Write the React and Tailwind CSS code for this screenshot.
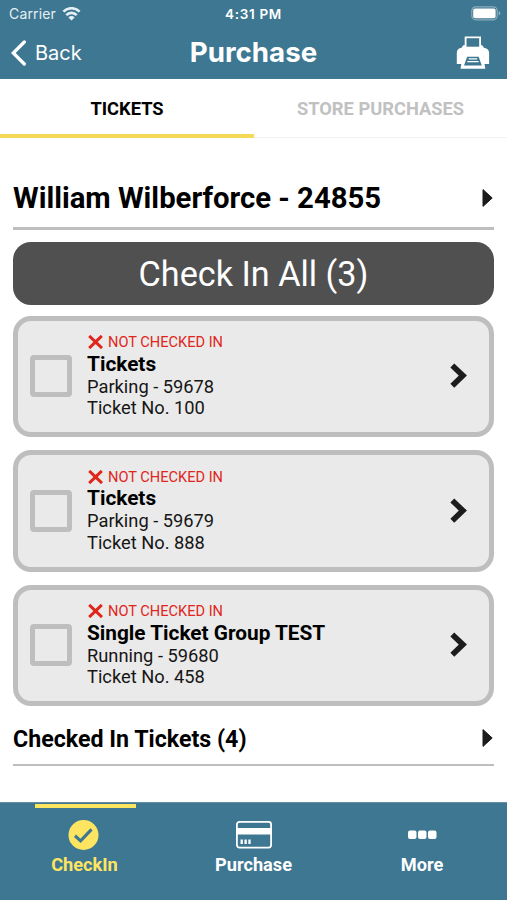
const TICKETS = [
  { id: 59678, title: 'Tickets', type: 'Parking', number: 100 },
  { id: 59679, title: 'Tickets', type: 'Parking', number: 888 },
  { id: 59680, title: 'Single Ticket Group TEST', type: 'Running', number: 458 },
]

function WifiIcon() {
  return (
    <svg width="19" height="14" viewBox="0 0 18 14" fill="none" stroke="currentColor" strokeWidth="2.7">
      <path d="M0.9 4.600a11.5 11.5 0 0 1 16.2 0" />
      <path d="M3.8 8.100a7.4 7.4 0 0 1 10.4 0" />
      <path d="M9 13.500 5.900 10.400a4.3 4.3 0 0 1 6.200 0z" fill="currentColor" stroke="none" />
    </svg>
  )
}

function BatteryIcon() {
  return (
    <svg width="30" height="15" viewBox="0 0 30 15" fill="none">
      <rect x="0.8" y="0.8" width="25.4" height="13" rx="4" stroke="#fff" strokeOpacity="0.4" strokeWidth="1.2" />
      <rect x="2.2" y="2.4" width="22.4" height="9.8" rx="2" fill="#fff" />
      <path d="M27.6 5c1.3.5 1.8 1.3 1.8 2.2s-.5 1.7-1.8 2.2z" fill="#fff" fillOpacity="0.4" />
    </svg>
  )
}

function PrinterIcon() {
  return (
    <svg width="34" height="34" viewBox="0 0 34 34">
      <path d="M8.700.6h16.300v8.700h1.300l1.600 2.400c2.800.3 5.200 2.200 5.200 5V28h-4.600l.8 4.700H4.500L5.300 28H.8V16.700c0-2.800 2-4.700 4.800-5l1.600-2.400h1.500z" fill="#fff" />
      <path d="M10.500 2.200h12.700v8.500H10.500z" fill="#3e7791" />
      <path d="M11.200 20.800h11.400l3.200 8.600H8z" fill="#3e7791" />
      <path d="M12.700 22.900h8.500M11.300 25.600h11.300" stroke="#fff" strokeWidth="1.400" />
    </svg>
  )
}

function CardIcon() {
  return (
    <svg width="36" height="28" viewBox="0 0 36 28" fill="none">
      <rect x="0.900" y="0.900" width="34.200" height="25.800" rx="2.600" stroke="#fff" strokeWidth="1.800" />
      <path d="M1 10.200h34" stroke="#fff" strokeWidth="6.600" />
      <path d="M5.700 18.500v4.500M9.600 18.500v4.500M13.500 18.500v4.500" stroke="#fff" strokeWidth="2.300" />
    </svg>
  )
}

function Arrow() {
  return (
    <svg width="12" height="20" viewBox="0 0 12 20">
      <path d="M1 1.600v16.800L10.200 10z" fill="#1c1c1c" stroke="#1c1c1c" strokeLinejoin="round" />
    </svg>
  )
}

function TicketCard({ ticket }) {
  return (
    <div className="flex h-[121.500px] items-center rounded-[18px] border-[5px] border-[#bebebe] bg-[#eaeaea] pl-3 pr-[21px]">
      <div className="size-[42px] shrink-0 rounded-[4px] border-[5px] border-[#bebebe]" />
      <div className="ml-[15px] flex-1">
        <div className="flex h-4 items-center gap-[5px] pl-px pt-px text-[14.600px] text-[#e0261b]">
          <svg width="15" height="14" viewBox="0 0 15 14" fill="none" stroke="currentColor" strokeWidth="3">
            <path d="M1.200.9 14 13.100M13.800.9 1.200 13.100" />
          </svg>
          <p className="whitespace-nowrap pt-0.5">NOT CHECKED IN</p>
        </div>
        <p className="mt-0.5 text-[20.800px] font-bold leading-[25px] text-black">{ticket.title}</p>
        <p className="-mt-px text-[18.300px] leading-[21.500px]">{`${ticket.type} - ${ticket.id}`}</p>
        <p className="text-[18.300px] leading-[21.500px]">{`Ticket No. ${ticket.number}`}</p>
      </div>
      <svg width="18" height="28" viewBox="0 0 18 28" fill="none" stroke="#1c1c1c" strokeWidth="5.600">
        <path d="M2.300 3.500 12.900 13.600 2.300 23.700" strokeLinejoin="miter" />
      </svg>
    </div>
  )
}

export default function App() {
  return (
    <div className="flex h-[900px] w-[507px] flex-col overflow-hidden bg-white font-['Roboto',sans-serif] text-[#161616]">
      <header className="h-[79px] shrink-0 bg-[#3e7791] font-['Inter',sans-serif] text-white">
        <div className="grid h-[27px] grid-cols-3 items-center px-[9px] text-[13.500px]">
          <div className="flex items-center gap-1.5 text-[#e6f0f4]">
            <span className="text-[14px] tracking-[0.15px]">Carrier</span>
            <WifiIcon />
          </div>
          <span className="pt-px text-center font-semibold tracking-[0.700px]">4:31 PM</span>
          <div className="-mr-[3px] flex justify-end">
            <BatteryIcon />
          </div>
        </div>
        <div className="grid h-[52px] grid-cols-3 items-center pl-[11px] pr-[17px]">
          <div className="flex items-center gap-2">
            <svg width="16" height="26" viewBox="0 0 16 26" fill="none" stroke="#fff" strokeWidth="3.300" strokeLinecap="round">
              <path d="M13.300 2 2.300 13 13.300 24" />
            </svg>
            <span className="text-[20px]">Back</span>
          </div>
          <h1 className="pl-[6px] text-center text-[27.700px] font-bold">Purchase</h1>
          <div className="flex justify-end">
            <PrinterIcon />
          </div>
        </div>
      </header>

      <div className="flex h-[59px] shrink-0 text-center text-[18.300px] font-bold">
        <div className="flex w-[254px] items-center justify-center border-b-4 border-[#f6d955] pt-[4px] text-black">TICKETS</div>
        <div className="flex flex-1 items-center justify-center border-b border-[#f1f1f1] pt-px text-[#c1c1c1]">
          STORE PURCHASES
        </div>
      </div>

      <main className="flex-1 px-[13px] pt-[29px]">
        <div className="flex h-[63px] items-center justify-between border-b-[3px] border-[#bebebe] pt-0.5 text-[29.300px] font-bold text-black">
          <h2 className="pt-0.5">William Wilberforce - 24855</h2>
          <Arrow />
        </div>
        <button type="button" className="mt-3 h-[63px] w-full rounded-[18px] bg-[#505050] pt-[2px] text-[34.200px] text-white">
          Check In All (3)
        </button>
        <div className="mt-[10.500px] flex flex-col gap-[13px]">
          {TICKETS.map((ticket) => (
            <TicketCard key={ticket.id} ticket={ticket} />
          ))}
        </div>
        <div className="flex h-[60px] items-center justify-between border-b-2 border-[#bebebe] pt-1.5 text-[23.200px] font-bold text-black">
          <h2 className="pt-[2px]">Checked In Tickets (4)</h2>
          <Arrow />
        </div>
      </main>

      <nav className="grid h-[98px] shrink-0 grid-cols-3 border-t border-[#688f9f] bg-[#3e7791] text-[18.200px] font-bold leading-6 text-white">
        <div className="flex flex-col items-center text-[#fde562]">
          <div className="ml-px mt-px h-1 w-[101px] bg-[#fde562]" />
          <svg className="mt-[11px] -ml-[3px]" width="31" height="32" viewBox="0 0 32 32">
            <circle cx="16" cy="16" r="15.500" fill="currentColor" />
            <path d="M7.200 16.800 13 22 24.300 10.200" fill="none" stroke="#3e7791" strokeWidth="3.200" />
          </svg>
          <span className="mt-[2px]">CheckIn</span>
        </div>
        <div className="flex flex-col items-center pt-[18px]">
          <CardIcon />
          <span className="mt-[4px]">Purchase</span>
        </div>
        <div className="flex flex-col items-center pr-px pt-[27px]">
          <svg width="30" height="10" viewBox="0 0 30 10" fill="#fff">
            <rect x="1" y="0.500" width="8.500" height="8.500" rx="2" />
            <rect x="11" y="0.500" width="8.500" height="8.500" rx="2" />
            <rect x="21" y="0.500" width="8.500" height="8.500" rx="2" />
          </svg>
          <span className="mt-[13px]">More</span>
        </div>
      </nav>
    </div>
  )
}
